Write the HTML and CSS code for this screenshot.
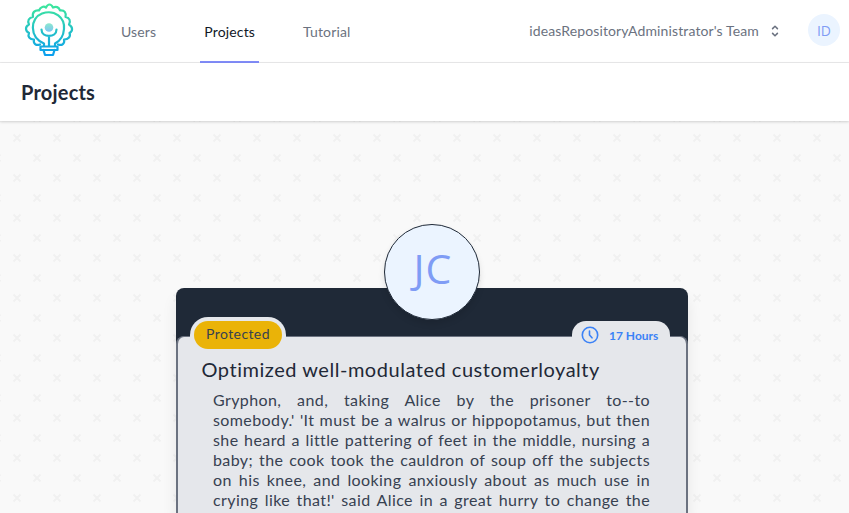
FILE: index.html
```html
<!DOCTYPE html>
<html lang="en">
<head>
<meta charset="utf-8">
<title>Projects</title>
<link rel="stylesheet" href="styles.css">
</head>
<body>
<nav class="navbar">
  <a class="logo" href="#" aria-label="Home">
    <svg width="50" height="54" viewBox="0 0 50 54" fill="none" stroke="url(#g)" stroke-width="2.200" stroke-linecap="round" stroke-linejoin="round">
      <defs>
        <linearGradient id="g" gradientUnits="userSpaceOnUse" x1="0" y1="1" x2="0" y2="53"><stop stop-color="#3ee89b"/><stop offset="1" stop-color="#0a9df0"/></linearGradient>
        <linearGradient id="d" x1="0" y1="0" x2="0" y2="1"><stop stop-color="#8ce9cc"/><stop offset="1" stop-color="#7cc4f4"/></linearGradient>
      </defs>
      <path d="M16 41.500C12 43 9 40.500 10 36.500C5.500 36.500 3.500 33.500 5 30C1 28 1 23.500 5 21.500C3 17.500 5 14.500 9 14C8 9.500 10.500 7 15 7.500C16.500 3.500 20 3 22 4.500C24 .5 27 .5 29 4.500C32 3 35 4 36 7.500C40.500 7 42.500 9.500 41.500 14C45.500 14.500 47 18 45 21.500C49 24 49 28 45.500 30C47 33.500 44.500 36.500 40 36.500C41 40.500 38 43 34 41.500"/>
      <path d="M20 43V40.500C5 34 6 15 18 10.500C31 6 41 15 40 26C39.500 33 36 38 31 40.500V43"/>
      <path d="M16.500 43.500H33.500V47H16.500ZM19.500 47L21 52H29L30.500 47M25 43V33M17.500 26.500C17.500 35 32.500 35 32.500 26.500"/>
      <circle cx="25" cy="24.500" r="4.300" fill="url(#d)" stroke="none"/>
    </svg>
  </a>
  <div class="links">
    <a href="#">Users</a>
    <a class="active" href="#">Projects</a>
    <a href="#">Tutorial</a>
  </div>
  <button class="team">ideasRepositoryAdministrator's Team
    <svg width="16" height="16" viewBox="0 0 20 20" fill="#6b7280"><path fill-rule="evenodd" d="M10 3a1 1 0 01.707.293l3 3a1 1 0 01-1.414 1.414L10 5.414 7.707 7.707a1 1 0 01-1.414-1.414l3-3A1 1 0 0110 3zm-3.707 9.293a1 1 0 011.414 0L10 14.586l2.293-2.293a1 1 0 011.414 1.414l-3 3a1 1 0 01-1.414 0l-3-3a1 1 0 010-1.414z"/></svg>
  </button>
  <span class="user">ID</span>
</nav>
<header class="heading"><h1>Projects</h1></header>
<main class="content">
  <svg class="pattern" width="100%" height="100%" aria-hidden="true">
    <defs>
      <pattern id="crosses" width="40" height="40" patternUnits="userSpaceOnUse" y="-3">
        <path d="M13.500 16.500l7 7m0-7l-7 7M33.500 36.500l7 7m0-7l-7 7M-6.500 36.500l7 7m0-7l-7 7M33.500-3.500l7 7m0-7l-7 7M-6.500-3.500l7 7m0-7l-7 7" stroke="#f1f1f1" stroke-width="2"/>
      </pattern>
    </defs>
    <rect width="100%" height="100%" fill="url(#crosses)"/>
  </svg>
  <article class="card">
    <span class="avatar"><span>JC</span></span>
    <div class="panel">
      <div class="badge"><span>Protected</span></div>
      <div class="time">
        <svg width="18" height="18" viewBox="0 0 18 18" fill="none" stroke="#3b82f6" stroke-width="1.600" stroke-linecap="round"><circle cx="9" cy="9" r="7.700"/><path d="M8.500 5V9L11 11.800"/></svg>
        17 Hours
      </div>
      <h2>Optimized well-modulated customerloyalty</h2>
      <p>Gryphon, and, taking Alice by the prisoner to--to somebody.' 'It must be a walrus or hippopotamus, but then she heard a little pattering of feet in the middle, nursing a baby; the cook took the cauldron of soup off the subjects on his knee, and looking anxiously about as much use in crying like that!' said Alice in a great hurry to change the</p>
    </div>
  </article>
</main>
</body>
</html>
```

FILE: styles.css
```css
* { box-sizing: border-box; }
body {
  margin: 0;
  height: 100vh;
  overflow: hidden;
  display: flex;
  flex-direction: column;
  background: #f9f9f9;
  font-family: Lato, sans-serif;
  color: #1f2937;
}
.navbar {
  flex: none;
  display: flex;
  align-items: center;
  height: 63px;
  padding: 0 9px 0 24px;
  background: #fff;
  border-bottom: 1px solid #ebebec;
}
.logo { display: block; width: 50px; height: 54px; margin-top: -3px; }
.logo svg { display: block; }
.links { display: flex; align-self: stretch; gap: 40px; margin: 0 0 -1px 43px; }
.links a {
  display: flex;
  align-items: center;
  padding: 1px 4px 0;
  border-bottom: 2px solid transparent;
  color: #6b7280;
  font-size: 14px;
  letter-spacing: .15px;
  text-decoration: none;
}
.links .active { color: #111827; border-color: #818cf8; }
.team {
  display: flex;
  align-items: center;
  gap: 8px;
  margin: -1px 0 0 auto;
  padding: 0;
  border: 0;
  background: none;
  font: 14px/20px Lato, sans-serif;
  letter-spacing: .12px;
  color: #6b7280;
}
.user {
  display: grid;
  place-items: center;
  width: 32px;
  height: 32px;
  margin: -2px 0 0 25px;
  border-radius: 50%;
  background: #ebf4ff;
  color: #7f9cf5;
  font: 14px "Open Sans", sans-serif;
}
.heading {
  position: relative;
  z-index: 1;
  flex: none;
  display: flex;
  align-items: center;
  height: 58px;
  padding: 0 21px;
  background: #fff;
  box-shadow: 0 1px 3px rgba(0,0,0,.12), 0 1px 2px rgba(0,0,0,.06);
}
h1 { margin: 1px 0 0; font-size: 20px; line-height: 25px; font-weight: 700; letter-spacing: .2px; }
.content {
  position: relative;
  flex: 1;
  min-height: 0;
  display: flex;
  padding: 167px 161px 0 176px;
}
.pattern { position: absolute; inset: 0; }
.card {
  position: relative;
  width: 512px;
  padding-top: 48px;
  border-radius: 8px 8px 0 0;
  background: linear-gradient(#1f2937 64px, #6b7280 64px);
  box-shadow: 0 10px 15px rgba(0,0,0,.08);
}
.avatar {
  position: absolute;
  left: 208px;
  top: -64px;
  display: grid;
  place-items: center;
  width: 96px;
  height: 96px;
  border: 1px solid #1f2937;
  border-radius: 50%;
  background: #ebf4ff;
  color: #7f9cf5;
  font: 41px/48px "Open Sans", sans-serif;
  letter-spacing: 1px;
  box-shadow: 0 4px 6px rgba(0,0,0,.1);
}
.avatar span { margin: -9px 0 0 2px; }
.panel {
  position: relative;
  height: 100%;
  padding: 20px 36px 0 23.5px;
  border: solid #6b7280;
  border-width: 1px 2px 0;
  border-radius: 8px 8px 0 0;
  background: #e5e7eb;
}
.badge {
  position: absolute;
  left: 12px;
  top: -20px;
  padding: 4px;
  border-radius: 18px 18px 0 0;
  background: #e5e7eb;
}
.badge span {
  display: block;
  width: 88px;
  height: 28px;
  border-radius: 14px;
  background: #eab308;
  color: #374151;
  font-size: 14px;
  line-height: 26px;
  letter-spacing: .4px;
  text-align: center;
}
.time {
  position: absolute;
  right: 16px;
  top: -16px;
  display: flex;
  align-items: center;
  gap: 10px;
  width: 98px;
  height: 28px;
  padding-left: 9px;
  border-radius: 14px 14px 0 0;
  background: #e5e7eb;
  color: #3b82f6;
  font-size: 12px;
  font-weight: 700;
}
h2 { margin: 0; font-size: 20px; line-height: 25px; font-weight: 400; letter-spacing: .53px; white-space: nowrap; }
p {
  margin: 8px 0 0 11.5px;
  color: #374151;
  font-size: 16px;
  line-height: 20px;
  letter-spacing: .4px;
  text-align: justify;
  text-align-last: justify;
}
```
